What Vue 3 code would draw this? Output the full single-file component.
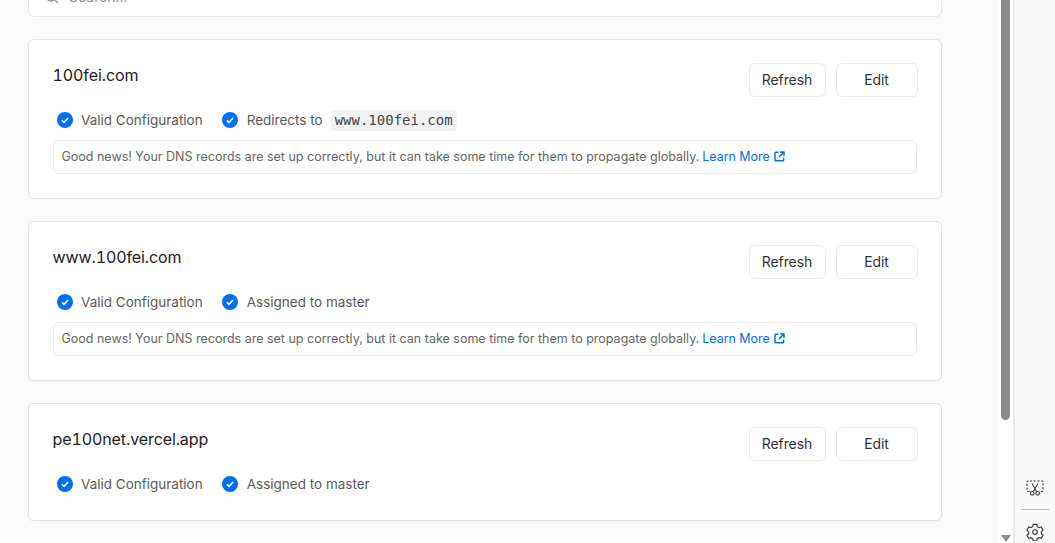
<script setup>
const domains = [
  {
    name: '100fei.com',
    status: 'Redirects to',
    code: 'www.100fei.com',
    note: true,
  },
  { name: 'www.100fei.com', status: 'Assigned to master', note: true },
  { name: 'pe100net.vercel.app', status: 'Assigned to master', note: false },
]
</script>

<template>
  <div class="page">
    <main class="main">
      <div class="search">
        <svg class="search-icon" width="16" height="16" viewBox="0 0 16 16" fill="none" stroke="#8f8f8f" stroke-width="1.3">
          <circle cx="7" cy="7" r="5" />
          <path d="M10.7 10.7 14 14" />
        </svg>
        <span>Search...</span>
      </div>

      <section v-for="d in domains" :key="d.name" class="card">
        <div class="card-head">
          <h3 class="domain">{{ d.name }}</h3>
          <div class="actions">
            <button class="btn refresh" type="button">Refresh</button>
            <button class="btn edit" type="button">Edit</button>
          </div>
        </div>
        <div class="status-row">
          <div class="status">
            <svg class="check" width="16" height="16" viewBox="0 0 16 16">
              <circle cx="8" cy="8" r="8" fill="#0070f3" />
              <path d="M4.9 8.300 7 10.300 11.100 6" fill="none" stroke="#fff" stroke-width="1.600" />
            </svg>
            <span>Valid Configuration</span>
          </div>
          <div class="status second">
            <svg class="check" width="16" height="16" viewBox="0 0 16 16">
              <circle cx="8" cy="8" r="8" fill="#0070f3" />
              <path d="M4.9 8.300 7 10.300 11.100 6" fill="none" stroke="#fff" stroke-width="1.600" />
            </svg>
            <span>{{ d.status }}</span>
            <code v-if="d.code" class="code">{{ d.code }}</code>
          </div>
        </div>
        <div v-if="d.note" class="note">
          Good news! Your DNS records are set up correctly, but it can take some time for them to propagate globally.
          <a class="learn">Learn More<svg width="11" height="11" viewBox="0 0 11 11" fill="none" stroke="#0070f3" stroke-width="1.500">
              <path d="M4.500 1.200H1.800a.8.8 0 0 0-.8.8v7a.8.8 0 0 0 .8.8h7a.8.8 0 0 0 .8-.8V6.500" />
              <path d="M6 1h4v4M10 1 5 6" />
            </svg></a>
        </div>
      </section>
    </main>

    <div class="scrollbar">
      <div class="thumb"></div>
      <div class="arrow-down"></div>
    </div>

    <aside class="side">
      <svg width="18" height="16" viewBox="0 0 18 16" fill="none" stroke="#3a3a3a" stroke-width="1.100">
        <path d="M3.500 11.500H2a1 1 0 0 1-1-1V2a1 1 0 0 1 1-1h14a1 1 0 0 1 1 1v8.500a1 1 0 0 1-1 1h-1.500" stroke-dasharray="2.200 1.500" />
        <path d="M6 3.500 10.600 11.500M12 3.500 7.400 11.500" />
        <circle cx="6.300" cy="13.300" r="1.800" />
        <circle cx="11.700" cy="13.300" r="1.800" />
      </svg>
      <div class="divider"></div>
      <svg width="18" height="18" viewBox="0 0 24 24" fill="none" stroke="#3a3a3a" stroke-width="1.500">
        <path d="M9.600 2.500h4.800l.7 3 2.300 1.300 2.900-.9 2.400 4.200-2.200 2.100v2.600l2.200 2.100-2.400 4.200-2.900-.9-2.300 1.300-.7 3H9.600l-.7-3-2.300-1.300-2.900.9-2.400-4.200 2.200-2.100v-2.600L1.300 10.100l2.400-4.200 2.900.9 2.300-1.300z" transform="translate(0 -.6)" />
        <circle cx="12" cy="12" r="3" />
      </svg>
    </aside>
  </div>
</template>

<style scoped>
.page {
  display: flex;
  height: 543px;
  overflow: hidden;
  background: #fafafa;
  font-family: Inter, "Liberation Sans", sans-serif;
  color: #171717;
}
.main {
  flex: none;
  width: 999px;
  box-sizing: border-box;
  padding: 0 57px 0 28px;
  display: flex;
  flex-direction: column;
  gap: 22px;
}
.search {
  flex: none;
  height: 41px;
  margin-top: -24px;
  box-sizing: border-box;
  padding: 0 15px;
  display: flex;
  align-items: center;
  gap: 9px;
  background: #fff;
  border: 1px solid #e6e6e6;
  border-radius: 6px;
  font-size: 14px;
  color: #8f8f8f;
}
.card {
  flex: none;
  box-sizing: border-box;
  padding: 23px 23px 24px 24px;
  background: #fff;
  border: 1px solid #e3e3e3;
  border-radius: 6px;
  box-shadow: 0 1px 2px rgba(0, 0, 0, 0.03);
}
.card-head {
  display: flex;
  justify-content: space-between;
  align-items: flex-start;
}
.domain {
  margin: 0 0 0 -0.5px;
  font-size: 16px;
  font-weight: 400;
  line-height: 24px;
  letter-spacing: -0.1px;
  font-variant-numeric: tabular-nums;
  color: #222;
}
.actions {
  display: flex;
  gap: 10px;
}
.btn {
  height: 34px;
  box-sizing: border-box;
  background: #fff;
  border: 1px solid #ebebeb;
  border-radius: 6px;
  font-family: inherit;
  font-size: 14px;
  letter-spacing: -0.1px;
  color: #333;
  padding: 0 1px 2px 0;
}
.refresh {
  width: 77px;
}
.edit {
  width: 82px;
}
.status-row {
  display: flex;
  align-items: center;
  gap: 19px;
  margin-top: 11px;
  padding-left: 4px;
  height: 24px;
  font-size: 13.5px;
  color: #5a5a5a;
}
.status {
  display: flex;
  align-items: center;
  gap: 8px;
}
.second {
  gap: 9px;
}
.check {
  flex: none;
}
.code {
  margin-left: -1px;
  padding: 2px 4px;
  background: #f2f2f2;
  border-radius: 4px;
  font-family: "DejaVu Sans Mono", "Liberation Mono", monospace;
  font-size: 14px;
  line-height: 17px;
  color: #444;
}
.note {
  width: 864px;
  height: 34px;
  box-sizing: border-box;
  margin-top: 8px;
  padding: 0 7.5px;
  border: 1px solid #ebebeb;
  border-radius: 6px;
  font-size: 12.5px;
  line-height: 32px;
  white-space: nowrap;
  color: #666;
}
.learn {
  margin-left: -0.5px;
  letter-spacing: -0.05px;
  color: #0070f3;
}
.learn svg {
  margin-left: 4px;
  vertical-align: -1px;
}
.scrollbar {
  flex: none;
  position: relative;
  width: 14px;
  background: #fff;
}
.thumb {
  width: 9px;
  height: 420px;
  margin-left: 2px;
  background: #8c8c8c;
  border-radius: 0 0 5px 5px;
}
.arrow-down {
  position: absolute;
  left: 2px;
  bottom: 1px;
  width: 0;
  height: 0;
  border-left: 5px solid transparent;
  border-right: 5px solid transparent;
  border-top: 7px solid #8c8c8c;
}
.side {
  flex: 1;
  box-sizing: border-box;
  border-left: 2px solid #e8e8e8;
  background: #f9f9f9;
  display: flex;
  flex-direction: column;
  align-items: center;
  justify-content: flex-end;
  padding-bottom: 2px;
}
.divider {
  width: 28px;
  height: 1px;
  background: #bdbdbd;
  margin: 13px 0 13px;
}
</style>

<style>
body {
  margin: 0;
}
</style>
